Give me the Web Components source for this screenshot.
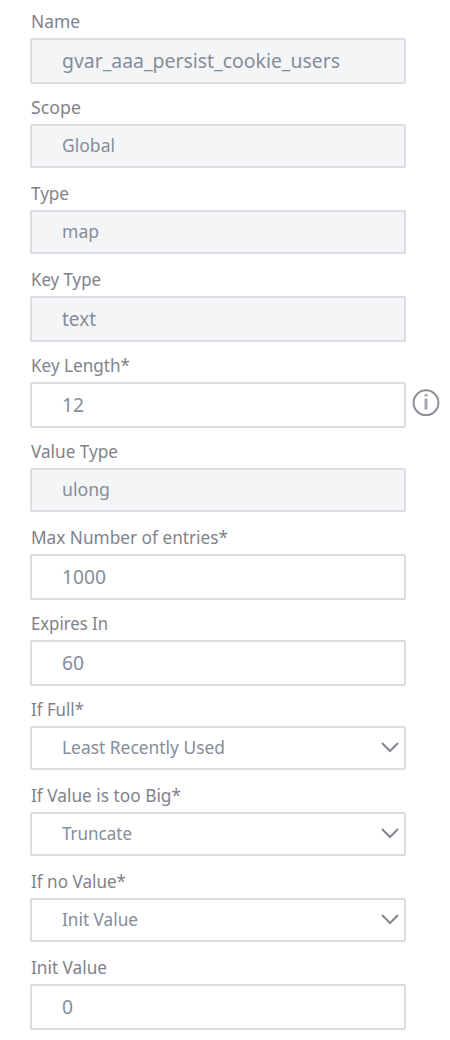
<!DOCTYPE html>
<html lang="en">
<head>
<meta charset="utf-8">
<title>Variable</title>
<style>
body{margin:0;background:#fff;font-family:"Noto Sans","Open Sans",sans-serif}
</style>
</head>
<body>
<variable-form>
<form-field label="Name" lw="49" vw="278" kind="input" readonly>gvar_aaa_persist_cookie_users</form-field>
<form-field label="Scope" lw="50" vw="53" kind="select" readonly>Global</form-field>
<form-field label="Type" lw="38" vw="37" kind="select" readonly>map</form-field>
<form-field label="Key Type" lw="70" vw="34" kind="input" readonly>text</form-field>
<form-field label="Key Length*" lw="99" vw="22" kind="input">12<info-icon slot="aside"></info-icon></form-field>
<form-field label="Value Type" lw="87" vw="48" kind="select" readonly>ulong</form-field>
<form-field label="Max Number of entries*" lw="197" vw="44" kind="input">1000</form-field>
<form-field label="Expires In" lw="77" vw="22" kind="input">60</form-field>
<form-field label="If Full*" lw="53" vw="163" kind="select">Least Recently Used<chevron-icon slot="arrow"></chevron-icon></form-field>
<form-field label="If Value is too Big*" lw="150" vw="70" kind="select">Truncate<chevron-icon slot="arrow"></chevron-icon></form-field>
<form-field label="If no Value*" lw="95" vw="76" kind="select">Init Value<chevron-icon slot="arrow"></chevron-icon></form-field>
<form-field label="Init Value" lw="76" vw="11" kind="input">0</form-field>
</variable-form>
<script>
customElements.define('variable-form', class extends HTMLElement {
  constructor() {
    super();
    this.attachShadow({mode: 'open'}).innerHTML = `<style>
      :host{display:flex;flex-direction:column;box-sizing:border-box;width:450px;height:1040px;padding:8px 0 0 30px;overflow:hidden}
    </style><slot></slot>`;
  }
});

// Text condensed or widened horizontally to the width given in its w attribute.
customElements.define('fit-text', class extends HTMLElement {
  connectedCallback() {
    if (!this.shadowRoot) this.attachShadow({mode: 'open'}).innerHTML = `<style>
      :host{display:inline-block;white-space:nowrap;transform-origin:0 50%}
    </style><slot></slot>`;
    this.style.transform = '';
    const natural = this.getBoundingClientRect().width;
    if (natural) this.style.transform = `scaleX(${this.getAttribute('w') / natural})`;
  }
});

customElements.define('form-field', class extends HTMLElement {
  connectedCallback() {
    this.attachShadow({mode: 'open'}).innerHTML = `<style>
      :host{display:block;flex:none;height:86px}
      .label{height:30px;line-height:27px;font-size:17.8px;color:#7f828b;padding-left:1px}
      .row{display:flex;align-items:flex-start}
      .box{display:flex;align-items:center;box-sizing:border-box;width:376px;height:46px;border:2px solid #dcdde2;border-radius:2px;padding:0 5px 0 30px;font-size:20.3px;line-height:26px;color:#858d9a;background:#fff}
      .box fit-text{margin-bottom:2px}
      :host([kind=select]) .box{height:44px;font-size:17.8px}
      :host([readonly]) .box{background:#f3f5f7}
      .arrow{margin-left:auto;display:flex}
    </style>
    <div class="label"><fit-text w="${this.getAttribute('lw')}">${this.getAttribute('label')}</fit-text></div>
    <div class="row"><div class="box"><fit-text w="${this.getAttribute('vw')}"><slot></slot></fit-text><span class="arrow"><slot name="arrow"></slot></span></div><slot name="aside"></slot></div>`;
  }
});

customElements.define('info-icon', class extends HTMLElement {
  constructor() {
    super();
    this.attachShadow({mode: 'open'}).innerHTML = `<style>:host{display:block;margin:7px 0 0 6px}svg{display:block}</style>
    <svg width="28" height="28" viewBox="0 0 28 28"><circle cx="14" cy="13.7" r="12.4" fill="none" stroke="#8c8e98" stroke-width="2"/><path d="M14 5v2.4M14 9.5v11" stroke="#a7a6b2" stroke-width="3"/></svg>`;
  }
});

customElements.define('chevron-icon', class extends HTMLElement {
  constructor() {
    super();
    this.attachShadow({mode: 'open'}).innerHTML = `<style>:host{display:block}svg{display:block}</style>
    <svg width="18" height="12" viewBox="0 0 18 12"><path d="M1 1L9 9L17 1" fill="none" stroke="#858791" stroke-width="2"/></svg>`;
  }
});
</script>
</body>
</html>
